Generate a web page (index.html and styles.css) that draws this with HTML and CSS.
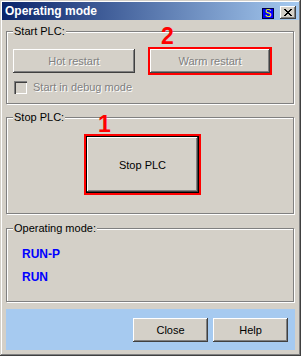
FILE: index.html
```html
<!DOCTYPE html>
<html>
<head>
<meta charset="utf-8">
<title>Operating mode</title>
<link rel="stylesheet" href="styles.css">
</head>
<body>
<div class="window">
  <div class="caption">
    <span class="caption-title">Operating mode</span>
    <span class="sys-icon">S</span>
    <span class="cap-btn">
      <svg class="cap-x" width="8" height="7" viewBox="0 0 8 7" shape-rendering="crispEdges"><path d="M0 0h2v1H0zM6 0h2v1H6zM1 1h2v1H1zM5 1h2v1H5zM2 2h4v1H2zM3 3h2v1H3zM2 4h4v1H2zM1 5h2v1H1zM5 5h2v1H5zM0 6h2v1H0zM6 6h2v1H6z" fill="#000"/></svg>
    </span>
  </div>
  <div class="client">
    <fieldset class="group group-start">
      <legend>Start PLC:</legend>
      <div class="btn-row">
        <button class="btn btn-disabled btn-hot" disabled>Hot restart</button>
        <button class="btn btn-disabled btn-warm marked" disabled>Warm restart</button>
      </div>
      <div class="check-row">
        <span class="checkbox"></span>
        <span class="check-label">Start in debug mode</span>
      </div>
    </fieldset>
    <fieldset class="group group-stop">
      <legend>Stop PLC:</legend>
      <button class="btn btn-stop marked">Stop PLC</button>
    </fieldset>
    <fieldset class="group group-mode">
      <legend>Operating mode:</legend>
      <div class="mode">RUN-P</div>
      <div class="mode">RUN</div>
    </fieldset>
    <div class="footer">
      <button class="btn btn-foot">Close</button>
      <button class="btn btn-foot">Help</button>
    </div>
  </div>
  <span class="badge badge-1">1</span>
  <span class="badge badge-2">2</span>
</div>
</body>
</html>
```
FILE: styles.css
```css
html, body {
  margin: 0;
  padding: 0;
  background: #d4d0c8;
}

body {
  font-family: "Liberation Sans", Arial, sans-serif;
  font-size: 11px;
  color: #000;
}

.window {
  position: relative;
  width: 301px;
  height: 356px;
  box-sizing: border-box;
  padding: 2px 2px 0;
  background: #d4d0c8;
  box-shadow: inset -1px -1px #404040, inset 1px 1px #d4d0c8,
              inset -2px -2px #808080, inset 2px 2px #ffffff;
  overflow: hidden;
}

.caption {
  display: flex;
  align-items: flex-start;
  height: 18px;
  padding: 0 3px 0 3px;
  background: linear-gradient(to right, #0a246a, #a6caf0);
}

.caption-title {
  flex: 1;
  color: #fff;
  font-weight: bold;
  font-size: 12px;
  line-height: 18px;
  white-space: nowrap;
}

.sys-icon {
  margin-top: 6px;
  width: 10px;
  height: 9px;
  border: 1px solid #000040;
  background: #0000ff;
  color: #ffff00;
  font-size: 10px;
  line-height: 10px;
  text-align: center;
}

.cap-btn {
  margin-top: 4px;
  margin-left: 6px;
  width: 16px;
  height: 13px;
  display: flex;
  align-items: center;
  justify-content: center;
  background: #d4d0c8;
  box-shadow: inset -1px -1px #404040, inset 1px 1px #ffffff,
              inset -2px -2px #808080;
}

.cap-x {
  display: block;
}

.client {
  padding: 5px 4px 0;
}

.group {
  margin: 0 1px 0 0;
  padding: 11px 6px 9px;
  border: 1px solid #808080;
  box-shadow: inset 1px 1px #ffffff, 1px 1px #ffffff;
  min-width: 0;
}

.group legend {
  padding: 0 1px;
  line-height: 13px;
  background: #d4d0c8;
}

.group-stop {
  margin-top: 7px;
  padding: 12px 6px 20px;
}

.group-mode {
  margin-top: 8px;
  padding: 12px 6px 17px;
}

.btn {
  font-family: "Liberation Sans", Arial, sans-serif;
  font-size: 11px;
  color: #000;
  background: #d4d0c8;
  border: 0;
  padding: 0;
  margin: 0;
  box-sizing: border-box;
  height: 24px;
  box-shadow: inset -1px -1px #404040, inset 1px 1px #ffffff,
              inset -2px -2px #808080;
  display: block;
}

.btn-disabled {
  color: #808080;
  text-shadow: 1px 1px #ffffff;
}

.btn-row {
  display: flex;
  gap: 15px;
}

.btn-hot {
  width: 122px;
}

.btn-warm {
  width: 120px;
}

.marked {
  outline: 2px solid #ff0000;
  outline-offset: 0;
}

.check-row {
  display: flex;
  align-items: center;
  margin-top: 8px;
  height: 13px;
}

.checkbox {
  width: 13px;
  height: 13px;
  box-sizing: border-box;
  margin-left: 1px;
  background: #d4d0c8;
  box-shadow: inset 1px 1px #808080, inset 2px 2px #404040,
              inset -1px -1px #ffffff, inset -2px -2px #d4d0c8;
}

.check-label {
  margin-left: 6px;
  color: #808080;
  text-shadow: 1px 1px #ffffff;
  line-height: 13px;
}

.btn-stop {
  margin-left: 73px;
  width: 113px;
  height: 57px;
  border: 1px solid #000;
}

.mode {
  margin-left: 9px;
  color: #0000ff;
  font-weight: bold;
  font-size: 12px;
  line-height: 14px;
}

.mode + .mode {
  margin-top: 9px;
}

.footer {
  margin-top: 7px;
  height: 41px;
  box-sizing: border-box;
  padding: 9px 7px 8px;
  display: flex;
  justify-content: flex-end;
  gap: 5px;
  background: #a6caf0;
}

.btn-foot {
  width: 75px;
}

.badge {
  position: absolute;
  color: #ff0000;
  font-weight: bold;
  font-size: 23px;
  line-height: 23px;
}

.badge-1 {
  left: 98px;
  top: 113px;
}

.badge-2 {
  left: 161px;
  top: 25px;
}
```
